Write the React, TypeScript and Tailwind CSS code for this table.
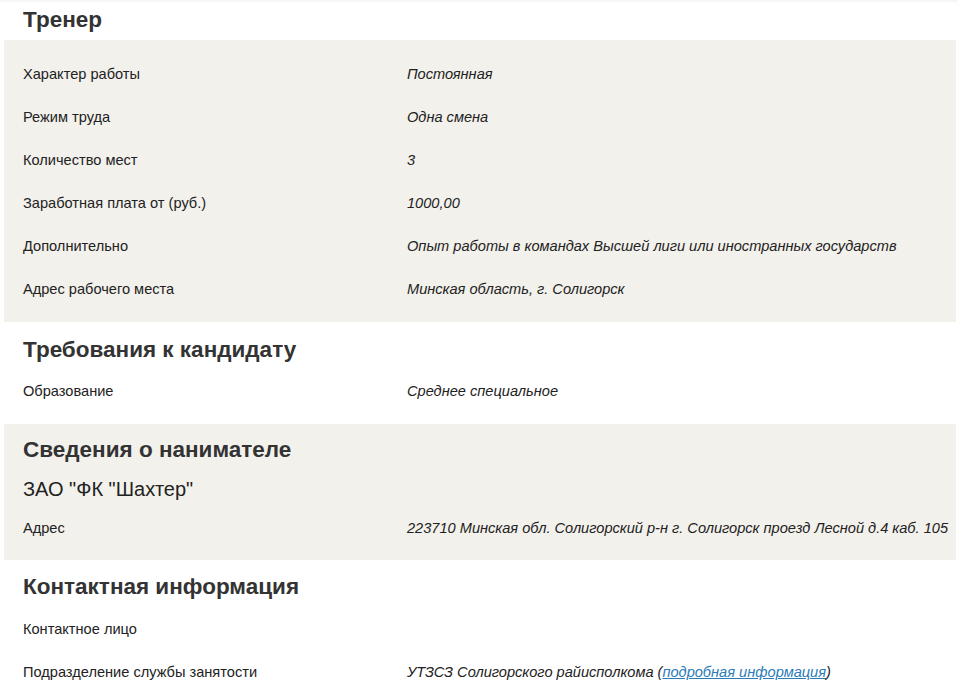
const font = { fontFamily: '"Liberation Sans", Arial, sans-serif' };

type Row = { label: string; value?: React.ReactNode };

const job: Row[] = [
  { label: 'Характер работы', value: 'Постоянная' },
  { label: 'Режим труда', value: 'Одна смена' },
  { label: 'Количество мест', value: '3' },
  { label: 'Заработная плата от (руб.)', value: '1000,00' },
  { label: 'Дополнительно', value: 'Опыт работы в командах Высшей лиги или иностранных государств' },
  { label: 'Адрес рабочего места', value: 'Минская область, г. Солигорск' },
];

function Rows({ rows }: { rows: Row[] }) {
  return (
    <div>
      {rows.map((r) => (
        <div
          key={r.label}
          className="grid h-[43px] grid-cols-[384px_1fr] items-center pt-[2px] text-[14.6px] text-[#222]"
        >
          <span>{r.label}</span>
          <span className="italic">{r.value}</span>
        </div>
      ))}
    </div>
  );
}

function Heading({ children }: { children: React.ReactNode }) {
  return <h2 className="h-[26px] pt-[1px] text-[22.5px] leading-[26px] font-bold text-[#333]">{children}</h2>;
}

export default function App() {
  return (
    <div style={font} className="min-h-[698px] bg-white shadow-[inset_0_3px_3px_-2px_rgba(0,0,0,0.07)]">
      <div className="pt-[6px] pl-[23px]">
        <Heading>Тренер</Heading>
      </div>
      <div className="mt-[8px] mr-[1px] ml-[4px] bg-[#f3f1ec] py-[12px] pl-[19px]">
        <Rows rows={job} />
      </div>

      <div className="pt-[14px] pb-[12px] pl-[23px]">
        <Heading>Требования к кандидату</Heading>
        <div className="mt-[7px]">
          <Rows rows={[{ label: 'Образование', value: 'Среднее специальное' }]} />
        </div>
      </div>

      <div className="mr-[1px] ml-[4px] bg-[#f3f1ec] pt-[12px] pb-[11px] pl-[19px]">
        <Heading>Сведения о нанимателе</Heading>
        <div className="mt-[14px] h-[24px] pt-[1px] text-[20px] leading-[24px] text-[#222]">ЗАО "ФК "Шахтер"</div>
        <div className="mt-[6px]">
          <Rows
            rows={[
              {
                label: 'Адрес',
                value: '223710 Минская обл. Солигорский р-н г. Солигорск проезд Лесной д.4 каб. 105',
              },
            ]}
          />
        </div>
      </div>

      <div className="pt-[13px] pl-[23px]">
        <Heading>Контактная информация</Heading>
        <div className="mt-[8px]">
          <Rows
            rows={[
              { label: 'Контактное лицо', value: '' },
              {
                label: 'Подразделение службы занятости',
                value: (
                  <>
                    УТЗСЗ Солигорского райисполкома (
                    <a href="#" className="text-[#2b7bb9] underline">
                      подробная информация
                    </a>
                    )
                  </>
                ),
              },
            ]}
          />
        </div>
      </div>
    </div>
  );
}
